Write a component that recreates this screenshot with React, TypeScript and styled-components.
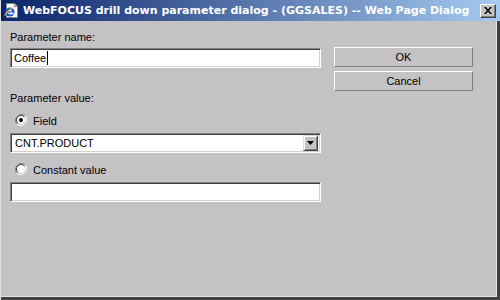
import styled, { createGlobalStyle } from "styled-components";

const GlobalStyle = createGlobalStyle`
  html, body {
    margin: 0;
    padding: 0;
    background: #c5c2c5;
  }
`;

export default function App() {
  return (
    <>
      <GlobalStyle />
      <Window>
        <TitleBar>
          <IeIcon />
          <Title>WebFOCUS drill down parameter dialog - (GGSALES) -- Web Page Dialog</Title>
          <CloseButton aria-label="Close">
            <svg width="8" height="7" viewBox="0 0 8 7">
              <path d="M0 0h2l2 2.5L6 0h2L5 3.5 8 7H6L4 4.5 2 7H0l3-3.5z" fill="#000" />
            </svg>
          </CloseButton>
        </TitleBar>
        <Body>
          <Panel>
            <FormColumn>
              <Label>Parameter name:</Label>
              <TextBox $top={4}>
                Coffee
                <Caret />
              </TextBox>
              <Label $top={24}>Parameter value:</Label>
              <RadioRow $top={10}>
                <Radio checked />
                Field
              </RadioRow>
              <Select>
                <SelectText>CNT.PRODUCT</SelectText>
                <DropButton>
                  <svg width="7" height="4" viewBox="0 0 7 4">
                    <path d="M0 0h7L3.5 4z" fill="#000" />
                  </svg>
                </DropButton>
              </Select>
              <RadioRow $top={11}>
                <Radio />
                Constant value
              </RadioRow>
              <TextBox />
            </FormColumn>
            <ButtonColumn>
              <PushButton>OK</PushButton>
              <PushButton>Cancel</PushButton>
            </ButtonColumn>
          </Panel>
        </Body>
      </Window>
    </>
  );
}

function IeIcon() {
  return (
    <IconBox>
      <svg width="17" height="17" viewBox="0 0 17 17">
        <path d="M3.5 1.5h8l3 3v11h-11z" fill="#fff" stroke="#808080" />
        <path d="M11.5 1.5v3h3" fill="#e0e0e0" stroke="#808080" />
        <circle cx="7" cy="10" r="4.6" fill="#1e5fd6" />
        <circle cx="7" cy="10" r="2.2" fill="#fff" />
        <rect x="4.5" y="9.3" width="5" height="1.4" fill="#1e5fd6" />
        <rect x="7" y="10.7" width="3.5" height="1.6" fill="#fff" />
        <path d="M1.2 13.5c1.5-4 6.5-8 11-8.5-3 1-8 5-10 9z" fill="#f4b82a" />
      </svg>
    </IconBox>
  );
}

const Window = styled.div`
  width: 500px;
  height: 300px;
  box-sizing: border-box;
  display: flex;
  flex-direction: column;
  border-left: 1px solid #dedede;
  background: #c5c2c5;
  font-family: "Liberation Sans", Arial, sans-serif;
  font-size: 11px;
  color: #000;
`;

const TitleBar = styled.div`
  height: 21px;
  flex-shrink: 0;
  display: flex;
  align-items: center;
  padding: 0 4px 0 2px;
  background: linear-gradient(90deg, #0a246a, #a6caf0);
  box-sizing: border-box;
`;

const IconBox = styled.div`
  width: 17px;
  height: 17px;
  margin-right: 3px;
  display: flex;
`;

const Title = styled.div`
  flex: 1;
  color: #fff;
  font-family: "DejaVu Sans", Verdana, sans-serif;
  font-weight: bold;
  font-size: 11px;
  white-space: nowrap;
  overflow: hidden;
`;

const CloseButton = styled.div`
  width: 16px;
  height: 14px;
  box-sizing: border-box;
  display: flex;
  align-items: center;
  justify-content: center;
  background: #c5c2c5;
  border-top: 1px solid #fff;
  border-left: 1px solid #fff;
  border-right: 1px solid #404040;
  border-bottom: 1px solid #404040;
  box-shadow: inset -1px -1px #808080;
`;

const Body = styled.div`
  flex: 1;
  display: flex;
  border-right: 3px solid #404040;
  border-bottom: 3px solid #404040;
`;

const Panel = styled.div`
  flex: 1;
  display: flex;
  gap: 13px;
  padding: 10px 0 0 9px;
  border-right: 1px solid #e6e4e6;
  border-bottom: 1px solid #e6e4e6;
`;

const FormColumn = styled.div`
  width: 311px;
  display: flex;
  flex-direction: column;
`;

const ButtonColumn = styled.div`
  width: 139px;
  display: flex;
  flex-direction: column;
  gap: 4px;
  padding-top: 16px;
`;

const Label = styled.div<{ $top?: number }>`
  line-height: 13px;
  margin-top: ${(p) => p.$top ?? 0}px;
`;

const sunken = `
  box-sizing: border-box;
  border-top: 1px solid #808080;
  border-left: 1px solid #808080;
  border-right: 1px solid #fff;
  border-bottom: 1px solid #fff;
  box-shadow: inset 1px 1px #404040, inset -1px -1px #d4d0c8;
`;

const TextBox = styled.div<{ $top?: number }>`
  ${sunken}
  height: 20px;
  flex-shrink: 0;
  margin-top: ${(p) => p.$top ?? 0}px;
  background: #fff;
  display: flex;
  align-items: center;
  padding-left: 3px;
  line-height: 13px;
`;

const Caret = styled.span`
  display: inline-block;
  width: 1px;
  height: 14px;
  background: #000;
  margin-left: 1px;
`;

const RadioRow = styled.div<{ $top: number }>`
  display: flex;
  align-items: flex-start;
  gap: 6px;
  height: 13px;
  line-height: 13px;
  margin-top: ${(p) => p.$top}px;
  margin-bottom: 5px;
  padding-left: 5px;
`;

function Radio({ checked }: { checked?: boolean }) {
  return (
    <RadioMark>
      <svg width="12" height="12" viewBox="0 0 12 12">
        <path d="M10.2 1.8A6 6 0 0 0 1.8 10.2" fill="none" stroke="#808080" strokeWidth="1" />
        <path d="M1.8 10.2A6 6 0 0 0 10.2 1.8" fill="none" stroke="#fff" strokeWidth="1" />
        <circle cx="6" cy="6" r="4.5" fill="#fff" />
        <path d="M9.2 2.8A4.5 4.5 0 0 0 2.8 9.2" fill="none" stroke="#404040" strokeWidth="1" />
        <path d="M2.8 9.2A4.5 4.5 0 0 0 9.2 2.8" fill="none" stroke="#d4d0c8" strokeWidth="1" />
        {checked && <circle cx="6" cy="6" r="2" fill="#000" />}
      </svg>
    </RadioMark>
  );
}

const RadioMark = styled.span`
  width: 12px;
  height: 12px;
  margin-top: -1px;
  display: flex;
`;

const Select = styled.div`
  ${sunken}
  height: 20px;
  flex-shrink: 0;
  background: #fff;
  display: flex;
  align-items: center;
  padding: 2px;
`;

const SelectText = styled.div`
  flex: 1;
  padding-left: 2px;
  line-height: 13px;
`;

const DropButton = styled.div`
  width: 15px;
  height: 16px;
  box-sizing: border-box;
  display: flex;
  align-items: center;
  justify-content: center;
  background: #c5c2c5;
  border-top: 1px solid #dfdfdf;
  border-left: 1px solid #dfdfdf;
  border-right: 1px solid #404040;
  border-bottom: 1px solid #404040;
  box-shadow: inset 1px 1px #fff, inset -1px -1px #808080;
`;

const PushButton = styled.div`
  height: 20px;
  box-sizing: border-box;
  display: flex;
  align-items: center;
  justify-content: center;
  border-top: 1px solid #fff;
  border-left: 1px solid #fff;
  border-right: 1px solid #808080;
  border-bottom: 1px solid #808080;
  background: #c5c2c5;
`;
